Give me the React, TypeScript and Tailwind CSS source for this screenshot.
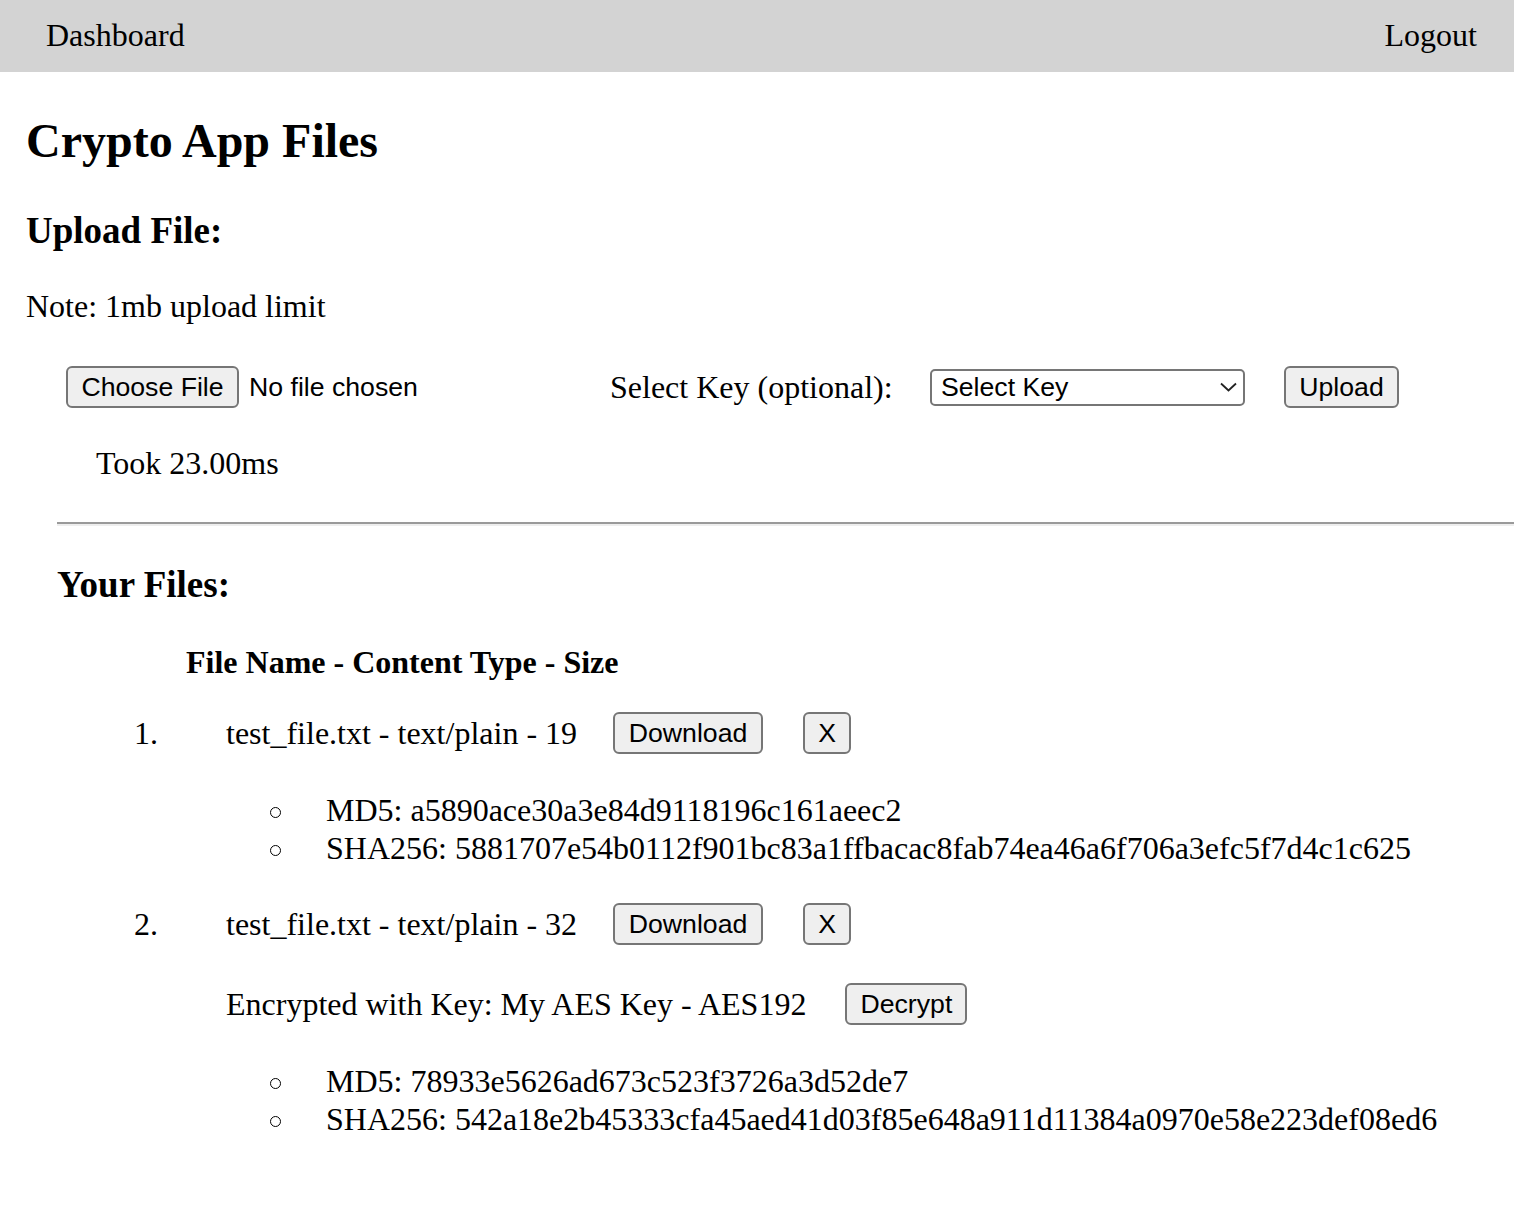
import { useState } from "react";

type FileRow = {
  id: number;
  name: string;
  type: string;
  size: number;
  md5: string;
  sha256: string;
  key?: string;
};

const files: FileRow[] = [
  {
    id: 1,
    name: "test_file.txt",
    type: "text/plain",
    size: 19,
    md5: "a5890ace30a3e84d9118196c161aeec2",
    sha256: "5881707e54b0112f901bc83a1ffbacac8fab74ea46a6f706a3efc5f7d4c1c625",
  },
  {
    id: 2,
    name: "test_file.txt",
    type: "text/plain",
    size: 32,
    md5: "78933e5626ad673c523f3726a3d52de7",
    sha256: "542a18e2b45333cfa45aed41d03f85e648a911d11384a0970e58e223def08ed6",
    key: "My AES Key - AES192",
  },
];

// plain grey browser-style button
function Btn({ label, w }: { label: string; w: string }) {
  return (
    <button
      className={`${w} h-[42px] shrink-0 flex items-center justify-center rounded-[6px] border-2 border-[#767676] bg-[#efefef] font-['Liberation_Sans',Arial,sans-serif] text-[26.67px] leading-none text-black`}
    >
      {label}
    </button>
  );
}

function Hashes({ f }: { f: FileRow }) {
  return (
    <ul className="ml-[244px] mt-[37px]">
      {[`MD5: ${f.md5}`, `SHA256: ${f.sha256}`].map((t) => (
        <li key={t} className="flex items-start h-[38px] leading-[38px] whitespace-nowrap">
          <span className="mt-[16px] w-[11px] h-[11px] rounded-full border-[1.5px] border-black shrink-0" />
          <span className="ml-[45px]">{t}</span>
        </li>
      ))}
    </ul>
  );
}

export default function App() {
  const [took] = useState("23.00");

  return (
    <div className="min-h-screen bg-white text-black font-['Liberation_Serif','Times_New_Roman',serif] text-[32px] leading-[38px] overflow-hidden">
      <nav className="h-[72px] bg-[#d3d3d3] flex items-center justify-between pl-[46px] pr-[37px] pb-[2px]">
        <a>Dashboard</a>
        <a>Logout</a>
      </nav>

      <div className="pl-[26px]">
        <h1 className="mt-[41px] text-[48px] leading-[56px] font-bold">Crypto App Files</h1>
        <h3 className="mt-[40px] text-[37px] leading-[44px] font-bold">Upload File:</h3>
        <p className="mt-[34px]">Note: 1mb upload limit</p>

        <div className="mt-[41px] ml-[40px] flex items-center h-[42px]">
          <div className="w-[544px] flex items-center shrink-0">
            <Btn label="Choose File" w="w-[173px]" />
            <span className="ml-[10px] font-['Liberation_Sans',Arial,sans-serif] text-[26.67px]">No file chosen</span>
          </div>
          <label className="w-[320px] shrink-0 whitespace-nowrap">Select Key (optional):</label>
          <div className="w-[315px] h-[37px] shrink-0 flex items-center justify-between rounded-[5px] border-2 border-[#767676] bg-white pl-[9px] pr-[6px] font-['Liberation_Sans',Arial,sans-serif] text-[26.67px]">
            <span>Select Key</span>
            <svg width="17" height="10" viewBox="0 0 17 10" fill="none">
              <path d="M1 1.5L8.5 8.5L16 1.5" stroke="#222" strokeWidth="1.8" />
            </svg>
          </div>
          <div className="ml-[39px]">
            <Btn label="Upload" w="w-[115px]" />
          </div>
        </div>

        <p className="mt-[36px] ml-[70px]">Took {took}ms</p>

        <div className="mt-[40px] ml-[31px]">
          <hr className="border-0 border-t-2 border-b-2 border-t-[#9a9a9a] border-b-[#eeeeee] h-[4px]" />
          <h3 className="mt-[37px] text-[37px] leading-[44px] font-bold">Your Files:</h3>
        </div>

        <div className="mt-[36px] ml-[160px] font-bold">File Name - Content Type - Size</div>

        <ol>
          {files.map((f, i) => (
            <li key={f.id} className={i === 0 ? "mt-[31px]" : "mt-[36px]"}>
              <div className="flex items-center h-[42px] whitespace-nowrap">
                <span className="ml-[108px] w-[92px] shrink-0">{i + 1}.</span>
                <span>
                  {f.name} - {f.type} - {f.size}
                </span>
                <div className="ml-[36px]">
                  <Btn label="Download" w="w-[150px]" />
                </div>
                <div className="ml-[40px]">
                  <Btn label="X" w="w-[48px]" />
                </div>
              </div>
              {f.key && (
                <div className="mt-[38px] flex items-center h-[42px] whitespace-nowrap">
                  <span className="ml-[200px]">Encrypted with Key: {f.key}</span>
                  <div className="ml-[39px]">
                    <Btn label="Decrypt" w="w-[122px]" />
                  </div>
                </div>
              )}
              <Hashes f={f} />
            </li>
          ))}
        </ol>
      </div>
    </div>
  );
}
